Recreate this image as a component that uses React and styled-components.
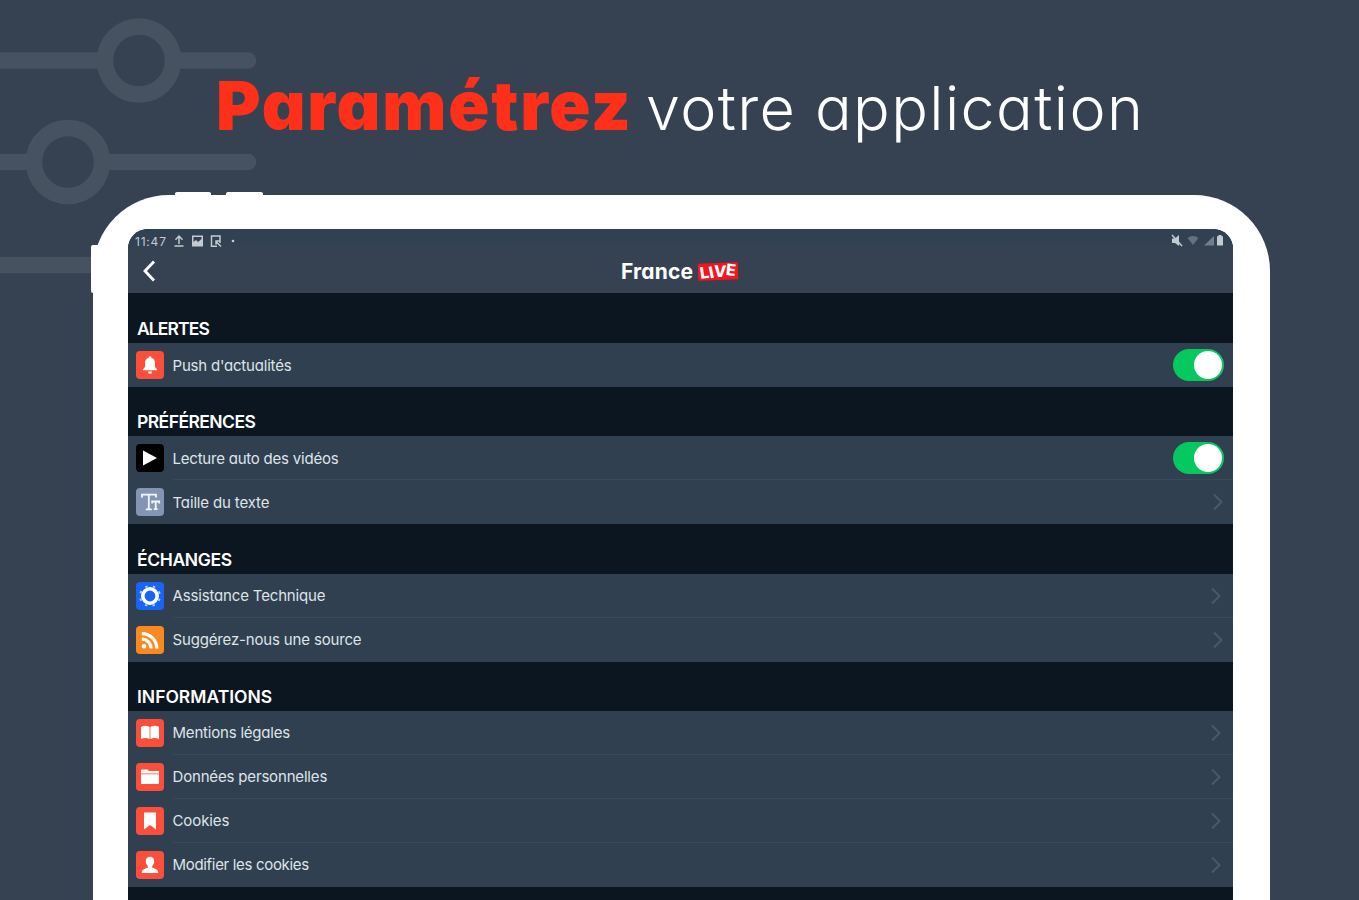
import styled, { createGlobalStyle, css } from "styled-components";

const GlobalStyle = createGlobalStyle`
  * {
    box-sizing: border-box;
  }

  body {
    margin: 0;
    overflow: hidden;
    background: #364252;
    font-family: "Inter", "Liberation Sans", sans-serif;
    font-feature-settings: "cv11" 1;
    color: #fff;
  }
`;

const Page = styled.main`
  position: relative;
  display: flex;
  flex-direction: column;
  width: 1359px;
  height: 900px;
  overflow: hidden;
  background: #364252;
`;

const Decoration = styled.svg`
  position: absolute;
  top: 0;
  left: 0;
`;

const Title = styled.h1`
  position: relative;
  display: flex;
  align-items: baseline;
  height: 195px;
  flex-shrink: 0;
  margin: 0;
  padding: 64px 0 0 216px;
  font-optical-sizing: none;
  line-height: 82px;
  white-space: nowrap;
`;

const TitleStrong = styled.span`
  width: 430px;
  color: #ff3019;
  font-size: 68px;
  font-weight: 900;
  letter-spacing: 1.8px;
`;

const TitleLight = styled.span`
  font-size: 61px;
  font-weight: 300;
  letter-spacing: 1.400px;
`;

const Tablet = styled.div`
  position: relative;
  width: 1177px;
  height: 760px;
  flex-shrink: 0;
  margin-left: 93px;
  padding: 34px 37px 0 35px;
  border-radius: 76px 76px 0 0;
  background: #fff;
`;

const SideButton = styled.i`
  position: absolute;
  top: ${({ $top }) => $top}px;
  left: ${({ $left }) => $left}px;
  width: ${({ $width }) => $width}px;
  height: ${({ $height }) => $height}px;
  border-radius: 2px;
  background: #fff;
`;

const Screen = styled.div`
  height: 100%;
  overflow: hidden;
  border-radius: 20px 20px 0 0;
  background: #0c1620;
`;

const Header = styled.header`
  height: 64px;
  background: linear-gradient(#304152, #364252 45%);
`;

const StatusBar = styled.div`
  display: flex;
  align-items: center;
  justify-content: space-between;
  height: 20px;
  padding: 4px 8px 0 7px;
  color: #c3cad1;
`;

const StatusGroup = styled.div`
  display: flex;
  align-items: center;
`;

const Time = styled.span`
  width: 32px;
  font-size: 12px;
  letter-spacing: 0.8px;
`;

const NavBar = styled.div`
  display: grid;
  grid-template-columns: 1fr auto 1fr;
  align-items: center;
  height: 44px;
  padding: 0 16px 0 14px;
`;

const Brand = styled.div`
  display: flex;
  align-items: center;
  gap: 5px;
  font-size: 21px;
  font-weight: 700;
`;

const BrandName = styled.span`
  width: 72px;
  letter-spacing: 0.2px;
`;

const LiveTag = styled.span`
  display: flex;
  align-items: center;
  justify-content: center;
  width: 40px;
  height: 17px;
  background: #f5141d;
  font-size: 16px;
  font-weight: 800;
  line-height: 17px;
  transform: rotate(-2deg);
`;

const LiveLetter = styled.span`
  transform: translateY(${({ $shift }) => $shift}px) rotate(${({ $turn }) => $turn}deg);
`;

const SectionTitle = styled.h2`
  height: ${({ $first }) => ($first ? 50 : 49.3)}px;
  margin: 0;
  padding: ${({ $first }) => ($first ? 24 : 23.3)}px 0 0 9px;
  font-size: 17.5px;
  font-weight: 600;
  line-height: 24px;
  letter-spacing: ${({ $track = 0 }) => $track}px;
`;

const Row = styled.div`
  display: flex;
  align-items: center;
  height: 44px;
  padding-left: 8px;
  background: #304051;
`;

const Tile = styled.span`
  display: flex;
  flex-shrink: 0;
  width: 28px;
  height: 28px;
  margin-right: 8.5px;
  border-radius: 4px;
  background: ${({ $color }) => $color};
`;

const RowBody = styled.div`
  display: flex;
  flex: 1;
  align-items: center;
  justify-content: space-between;
  height: 44px;
  padding-right: ${({ $inset = 9 }) => $inset}px;
  ${({ $divided }) =>
    $divided &&
    css`
      box-shadow: inset 0 -1px #3a4859;
    `}
`;

const Label = styled.span`
  color: #dfe4e8;
  font-size: 15px;
  letter-spacing: ${({ $track = 0 }) => $track}px;
`;

const Toggle = styled.span`
  display: flex;
  justify-content: flex-end;
  width: 51px;
  height: 32px;
  padding: 2px;
  border-radius: 16px;
  background: #05c95f;
`;

const Knob = styled.span`
  width: 28px;
  height: 28px;
  border-radius: 50%;
  background: #fff;
`;

const glyphs = {
  bell: (
    <path
      fill="#fff"
      d="M14 5.200c.9 0 1.400.6 1.400 1.500 2.400.6 3.600 2.500 3.600 5v4.200l2 2.300v1H7v-1l2-2.300v-4.200c0-2.500 1.200-4.400 3.600-5 0-.9.5-1.500 1.400-1.500zM12 20.400h4c0 1.500-.8 2.300-2 2.300s-2-.8-2-2.300z"
    />
  ),
  play: <path fill="#fff" d="M7 6.500v15L21 14z" />,
  text: (
    <g fill="none" stroke="#f2f5fa" strokeWidth="1.800">
      <path d="M6 9.500V6.700h14v2.800M12.800 6.700v14.500M9.800 21.300h6" />
      <path d="M16.200 15.500v-2h7v2M19.700 13.500v7.600M17.800 21.200h3.800" />
    </g>
  ),
  help: (
    <g fill="none" stroke="#fff">
      <circle cx="14" cy="14" r="7.200" strokeWidth="3.600" />
      <circle cx="14" cy="14" r="10" strokeWidth="1.800" strokeDasharray="2.400 5.454" strokeDashoffset="-2.700" opacity=".7" />
    </g>
  ),
  rss: (
    <g fill="none" stroke="#fff" strokeWidth="3.200">
      <circle cx="8" cy="20.300" r="2.300" fill="#fff" stroke="none" />
      <path d="M5.800 13.200a9 9 0 0 1 9.200 9.200M5.800 7.600A14.800 14.800 0 0 1 20.800 22.400" />
    </g>
  ),
  book: (
    <path
      fill="#fff"
      d="M5 8c3-1.900 6-1.700 8.600 0v12c-2.600-1.500-5.600-1.500-8.600 0zM14.400 8c2.600-1.700 5.600-1.900 8.600 0v12c-3-1.500-6-1.500-8.600 0z"
    />
  ),
  folder: (
    <path fill="#fff" d="M5 7.500c0-.6.4-1 1-1h5.500l1.500 1.600h9c.6 0 1 .4 1 1v1.400H5zM5 11.200h18v8.800c0 .6-.4 1-1 1H6c-.6 0-1-.4-1-1z" />
  ),
  bookmark: <path fill="#fff" d="M8 5.500h12v17L14 18l-6 4.500z" />,
  person: (
    <path
      fill="#fff"
      d="M14 5.800c2.700 0 4.200 1.900 4.200 4.500 0 2-.8 3.700-2 4.600v1.900c3.200.8 6 1.900 6 5.200H5.800c0-3.300 2.800-4.400 6-5.200v-1.900c-1.200-.9-2-2.600-2-4.600 0-2.600 1.500-4.500 4.200-4.500z"
    />
  ),
};

const sections = [
  {
    title: "ALERTES",
    track: -0.9,
    rows: [{ label: "Push d'actualités", track: -0.2, icon: "bell", color: "#fb4f3b", toggle: true }],
  },
  {
    title: "PRÉFÉRENCES",
    track: -0.55,
    rows: [
      { label: "Lecture auto des vidéos", track: -0.22, icon: "play", color: "#000", toggle: true },
      { label: "Taille du texte", track: -0.15, icon: "text", color: "#8495b4" },
    ],
  },
  {
    title: "ÉCHANGES",
    track: -0.35,
    rows: [
      { label: "Assistance Technique", track: -0.16, icon: "help", color: "#1764f5", inset: 11 },
      { label: "Suggérez-nous une source", track: -0.16, icon: "rss", color: "#f98a22" },
    ],
  },
  {
    title: "INFORMATIONS",
    track: 0,
    rows: [
      { label: "Mentions légales", track: -0.2, icon: "book", color: "#fb4f3b", inset: 11 },
      { label: "Données personnelles", track: -0.17, icon: "folder", color: "#fb4f3b", inset: 11 },
      { label: "Cookies", track: -0.1, icon: "bookmark", color: "#fb4f3b", inset: 11 },
      { label: "Modifier les cookies", track: -0.32, icon: "person", color: "#fb4f3b", inset: 11 },
    ],
  },
];

const Sliders = () => (
  <Decoration width="270" height="290" fill="none" stroke="#465260" strokeWidth="16.500" strokeLinecap="round">
    <path d="M-10 60.500h115M173 60.500h75M-10 162h44M102 162h146M-10 265h258" />
    <circle cx="139" cy="60.500" r="34" fill="#364252" />
    <circle cx="68" cy="162" r="34" fill="#364252" />
  </Decoration>
);

const Chevron = () => (
  <svg width="12" height="18" fill="none" stroke="#4a5968" strokeWidth="2">
    <path d="M2 1.500 9.500 9 2 16.500" />
  </svg>
);

const StatusIcons = () => (
  <StatusGroup>
    <Time>11:47</Time>
    <svg width="75" height="14" fill="none" stroke="#c3cad1" strokeWidth="1.500">
      <path d="M12 10V3M8.500 5.800 12 2l3.500 3.800M7.500 12h9" />
      <path fill="#c3cad1" stroke="none" fillRule="evenodd" d="M25 1.500h11v11H25zM26.500 3v5l2.500-2 2 2 3.500-3V3z" />
      <path d="M50 12.200h-5.500V2H53v7M49 7.500l5 5M49 10.500v-3.500h3.500" />
      <circle cx="66" cy="7" r="1.300" fill="#c3cad1" stroke="none" />
    </svg>
  </StatusGroup>
);

const SignalIcons = () => (
  <svg width="54" height="14" fill="#c3cad1">
    <path d="M1 4.500h3l4-3.500v11L4 9H1z" />
    <path d="m1 1 10 11" stroke="#c3cad1" strokeWidth="1.500" />
    <path opacity=".35" d="M16.500 4q5.500-4 11 0L22 11z" />
    <path opacity=".45" d="M43 2v9.500h-10z" />
    <path d="M46 2.200h1.500V1h3v1.200h1.500v9.300H46z" />
  </svg>
);

const SettingsRow = ({ row, divided }) => (
  <Row>
    <Tile $color={row.color}>
      <svg width="28" height="28" viewBox="0 0 28 28">
        {glyphs[row.icon]}
      </svg>
    </Tile>
    <RowBody $divided={divided} $inset={row.inset}>
      <Label $track={row.track}>{row.label}</Label>
      {row.toggle ? (
        <Toggle>
          <Knob />
        </Toggle>
      ) : (
        <Chevron />
      )}
    </RowBody>
  </Row>
);

const App = () => {
  return (
    <>
      <GlobalStyle />
      <Page>
        <Sliders />
        <Title>
          <TitleStrong>Paramétrez</TitleStrong>
          <TitleLight>votre application</TitleLight>
        </Title>
        <Tablet>
          <SideButton $top={-3} $left={82} $width={36} $height={8} />
          <SideButton $top={-3} $left={133} $width={37} $height={8} />
          <SideButton $top={50} $left={-2} $width={8} $height={48} />
          <Screen>
            <Header>
              <StatusBar>
                <StatusIcons />
                <SignalIcons />
              </StatusBar>
              <NavBar>
                <svg width="16" height="24" fill="none" stroke="#fff" strokeWidth="2.800">
                  <path d="M12 2.500 3 12l9 9.500" />
                </svg>
                <Brand>
                  <BrandName>France</BrandName>
                  <LiveTag>
                    <LiveLetter $shift={1} $turn={-6}>L</LiveLetter>
                    <LiveLetter $shift={1} $turn={-10}>I</LiveLetter>
                    <LiveLetter $shift={0} $turn={4}>V</LiveLetter>
                    <LiveLetter $shift={-1} $turn={8}>E</LiveLetter>
                  </LiveTag>
                </Brand>
              </NavBar>
            </Header>
            {sections.map((section, index) => (
              <section key={section.title}>
                <SectionTitle $first={index === 0} $track={section.track}>
                  {section.title}
                </SectionTitle>
                {section.rows.map((row, i) => (
                  <SettingsRow key={row.label} row={row} divided={i < section.rows.length - 1} />
                ))}
              </section>
            ))}
          </Screen>
        </Tablet>
      </Page>
    </>
  );
};

export default App;
